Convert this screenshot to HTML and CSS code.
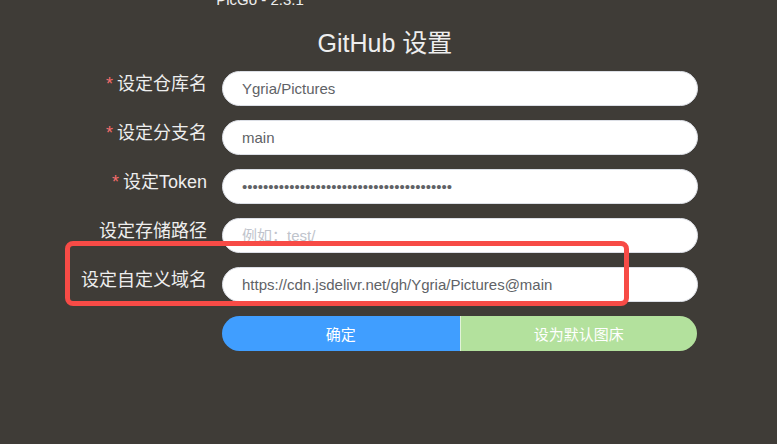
FILE: index.html
```html
<!DOCTYPE html>
<html lang="zh-CN">
<head>
<meta charset="utf-8">
<title>PicGo</title>
<link rel="stylesheet" href="styles.css">
</head>
<body>
<header class="titlebar">PicGo - 2.3.1</header>
<main class="view">
  <h1 class="view-title">GitHub 设置</h1>
  <form class="form">
    <div class="row">
      <label class="label required" for="repo">设定仓库名</label>
      <input class="field" id="repo" type="text" value="Ygria/Pictures">
    </div>
    <div class="row">
      <label class="label required" for="branch">设定分支名</label>
      <input class="field" id="branch" type="text" value="main">
    </div>
    <div class="row">
      <label class="label required" for="token">设定Token</label>
      <input class="field" id="token" type="password" value="0000000000000000000000000000000000000000">
    </div>
    <div class="row">
      <label class="label" for="path">设定存储路径</label>
      <input class="field" id="path" type="text" placeholder="例如：test/">
    </div>
    <div class="row marked">
      <label class="label" for="domain">设定自定义域名</label>
      <input class="field" id="domain" type="text" value="https://cdn.jsdelivr.net/gh/Ygria/Pictures@main">
    </div>
    <div class="row">
      <div class="buttons">
        <button class="button primary" type="button">确定</button>
        <button class="button success" type="button">设为默认图床</button>
      </div>
    </div>
  </form>
</main>
</body>
</html>
```
FILE: styles.css
```css
* {
  box-sizing: border-box;
}

body {
  margin: 0;
  min-height: 100vh;
  overflow: hidden;
  background: #3f3c37;
  color: #eee;
  font-family: "Liberation Sans", "Noto Sans CJK SC", sans-serif;
  font-size: 15px;
}

.titlebar {
  height: 24px;
  margin-top: -12px;
  padding-right: 257px;
  line-height: 24px;
  text-align: center;
}

.view {
  padding: 12px 79px 0 72px;
}

.view-title {
  margin: 0 0 8px;
  font-size: 25px;
  font-weight: 400;
  line-height: 39px;
  text-align: center;
}

.form {
  display: grid;
  gap: 14px;
}

.row {
  position: relative;
  display: grid;
  grid-template-columns: 135px 1fr;
  column-gap: 15px;
}

.label {
  font-size: 18px;
  line-height: 27px;
  text-align: right;
  white-space: nowrap;
}

.required::before {
  content: "*";
  margin-right: 4px;
  color: #f56c6c;
}

.field {
  width: 100%;
  height: 35px;
  padding: 0 19px;
  border: 1px solid #dcdfe6;
  border-radius: 18px;
  background: #fff;
  color: #606266;
  font: inherit;
}

.field::placeholder {
  color: #c0c4cc;
}

.marked::after {
  content: "";
  position: absolute;
  inset: -26px 69px -4px -7px;
  z-index: 1;
  border: 5px solid #f74b46;
  border-radius: 8px;
  pointer-events: none;
}

.buttons {
  grid-column: 2;
  display: grid;
  grid-template-columns: 1fr 1fr;
  margin-right: 1px;
  border-radius: 18px;
  overflow: hidden;
}

.button {
  height: 35px;
  padding: 0;
  border: 0;
  color: #fff;
  font: inherit;
}

.primary {
  background: #409eff;
}

.success {
  border-left: 1px solid #e1f3d8;
  background: #b3e19d;
}
```
